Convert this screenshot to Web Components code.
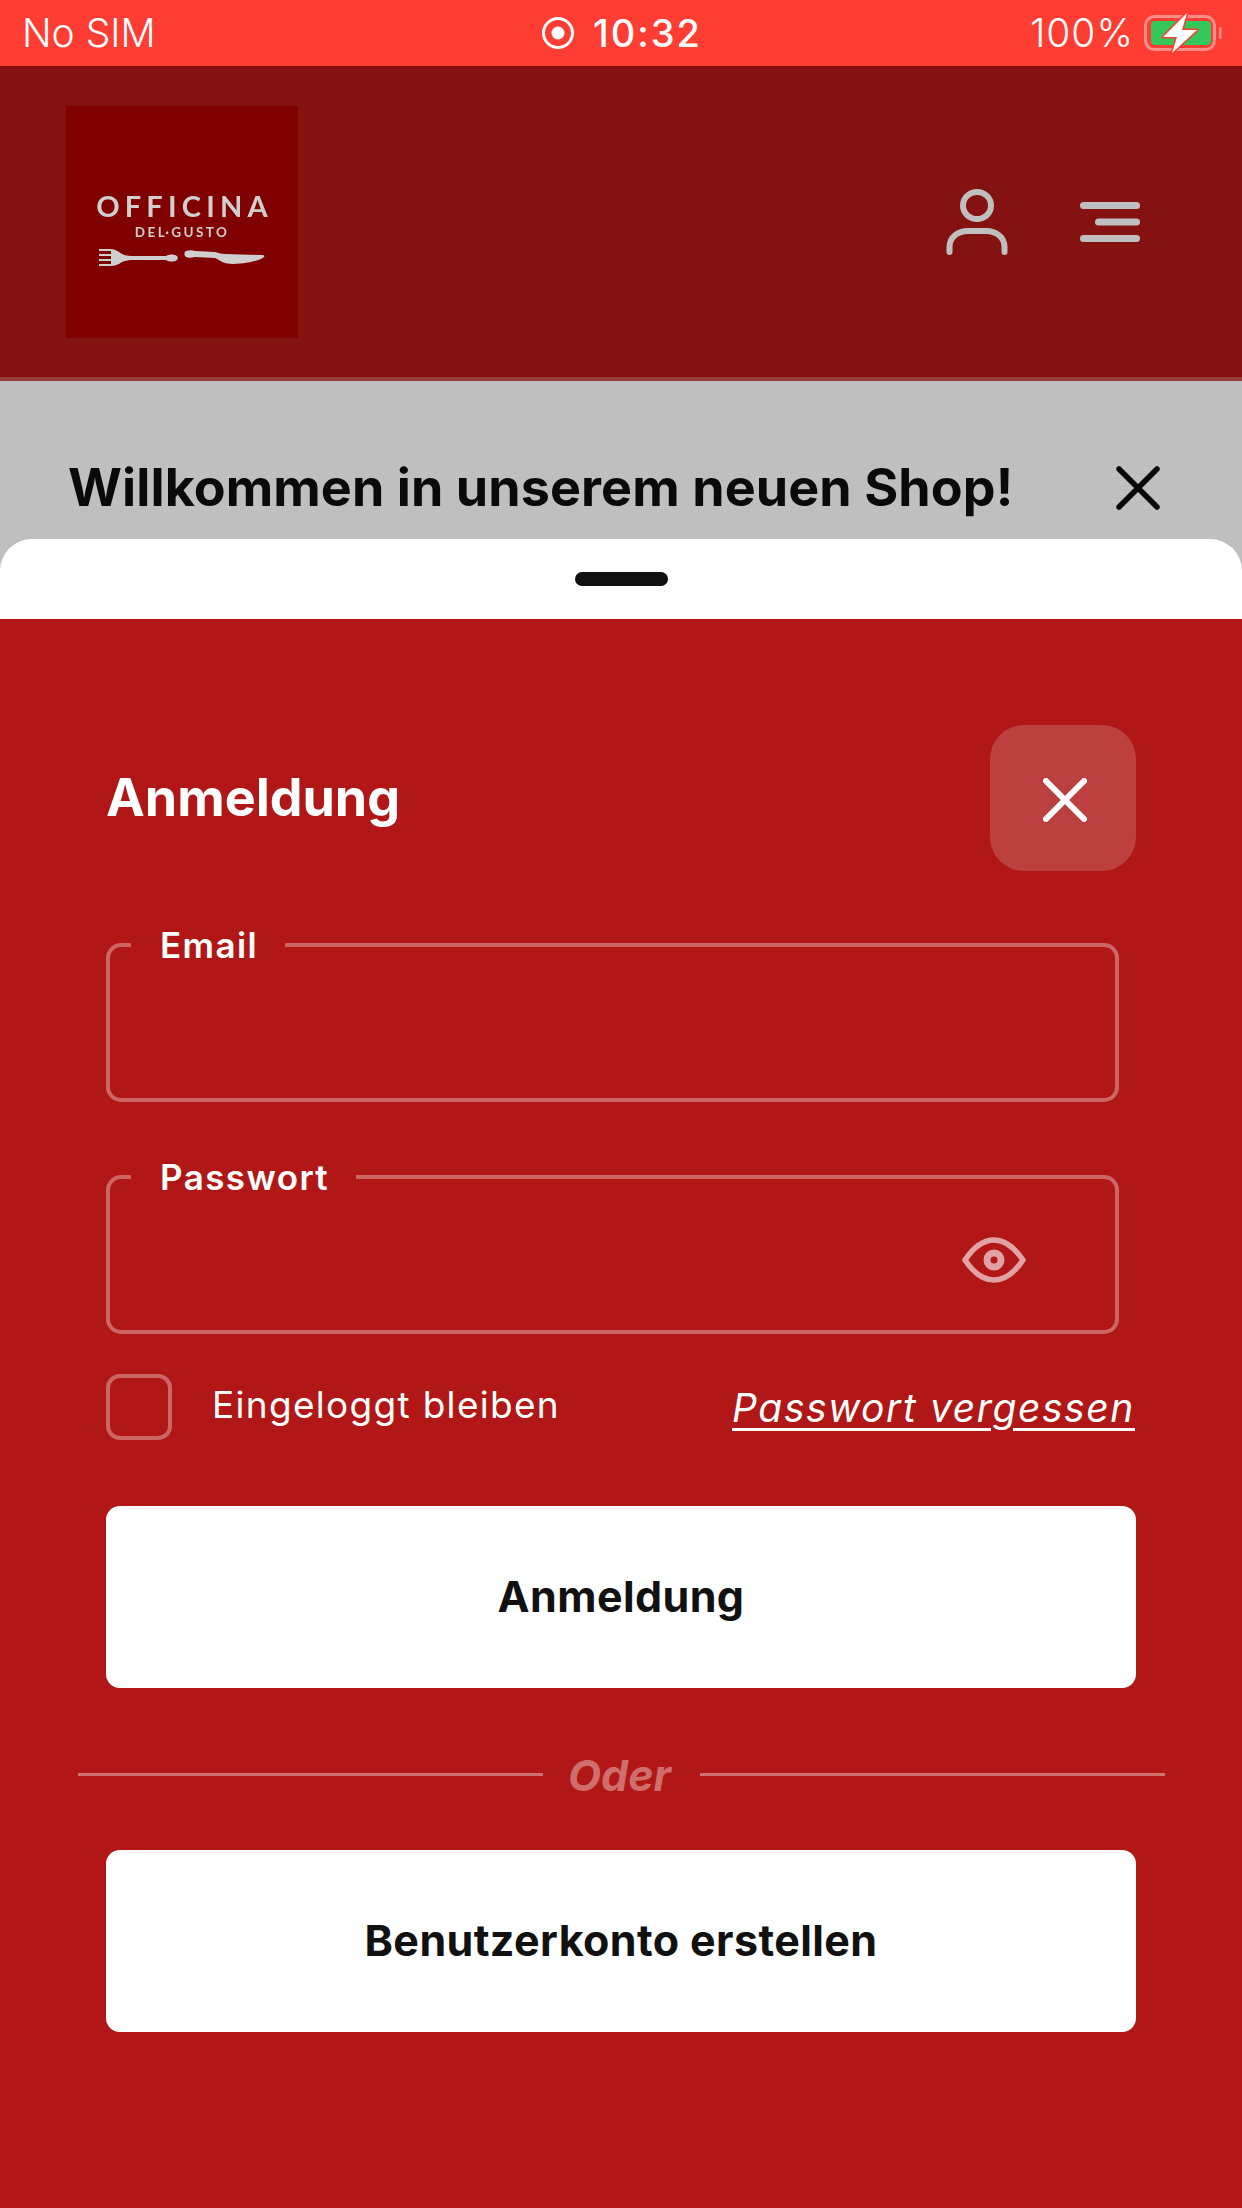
<!DOCTYPE html>
<html lang="de">
<head>
<meta charset="utf-8">
<title>Officina del Gusto</title>
<style>
  html, body { margin: 0; padding: 0; background: #b01716; }
  body { font-family: Inter, "Liberation Sans", sans-serif; }
</style>
</head>
<body>
<shop-app>
  <status-bar slot="top"></status-bar>
  <site-header slot="top"></site-header>
  <welcome-banner slot="top">Willkommen in unserem neuen Shop!</welcome-banner>
  <bottom-sheet>
    <sheet-title>Anmeldung</sheet-title>
    <outline-field label="Email"></outline-field>
    <outline-field label="Passwort" reveal></outline-field>
    <remember-row></remember-row>
    <action-button>Anmeldung</action-button>
    <or-divider>Oder</or-divider>
    <action-button>Benutzerkonto erstellen</action-button>
  </bottom-sheet>
</shop-app>

<script>
// helper: every element gets an open shadow root from a string
class Base extends HTMLElement {
  constructor() {
    super();
    this.attachShadow({ mode: 'open' });
    this.shadowRoot.innerHTML = this.markup();
  }
  markup() { return ''; }
}

class ShopApp extends Base {
  markup() {
    return `<style>
      :host { display: flex; flex-direction: column; width: 1242px; height: 2208px; background: #bfbfbf; overflow: hidden; }
    </style>
    <slot name="top"></slot>
    <slot></slot>`;
  }
}

class StatusBar extends Base {
  markup() {
    return `<style>
      :host { display: grid; grid-template-columns: 1fr auto 1fr; align-items: center; height: 66px; padding: 0 18px 0 22px;
        background: #ff3d33; color: #fff; font: 300 39px/66px Inter, sans-serif; box-sizing: border-box; }
      .mid { display: flex; align-items: center; gap: 19px; font-weight: 500; font-size: 38px; letter-spacing: 2px; margin-left: -2px; }
      .right { display: flex; align-items: center; justify-content: flex-end; gap: 10px; }
      .right span { letter-spacing: 1px; }
      svg { display: block; }
    </style>
    <div>No SIM</div>
    <div class="mid">
      <svg width="32" height="32" viewBox="0 0 32 32"><circle cx="16" cy="16" r="14.5" fill="none" stroke="#fff" stroke-width="3"/><circle cx="16" cy="16" r="6.5" fill="#fff"/></svg>
      <span>10:32</span>
    </div>
    <div class="right">
      <span>100%</span>
      <svg width="80" height="42" viewBox="0 0 80 42">
        <rect x="1.5" y="4.5" width="69" height="33" rx="9" fill="none" stroke="#ff8f88" stroke-width="3"/>
        <rect x="7" y="9" width="60" height="24" rx="4" fill="#34c759"/>
        <rect x="75" y="15" width="2.5" height="12" rx="1.2" fill="#ff8f88"/>
        <path d="M43 1 L19 25 L33 25 L28 41 L53 18 L38 18 Z" fill="#fff" stroke="#ff3d33" stroke-width="3" paint-order="stroke" stroke-linejoin="round"/>
      </svg>
    </div>`;
  }
}

class SiteHeader extends Base {
  markup() {
    return `<style>
      :host { display: flex; align-items: center; height: 315px; padding: 40px 102px 40px 66px; box-sizing: border-box;
        background: #831211; border-bottom: 4px solid #99403f; }
      .logo { width: 232px; height: 232px; background: #800000; color: #cfcfcf; display: flex; flex-direction: column; align-items: center;
        padding-top: 86px; box-sizing: border-box; font-family: Lato, sans-serif; filter: blur(.5px); }
      .name { font-size: 29px; line-height: 27px; font-weight: 700; letter-spacing: 5.2px; margin-right: -5px; }
      .sub { font-size: 13.5px; line-height: 14px; font-weight: 700; letter-spacing: 2.4px; margin-top: 6px; }
      .cutlery { display: block; margin-top: 9px; }
      .icons { margin-left: auto; display: flex; align-items: center; gap: 72px; }
      svg { display: block; }
    </style>
    <div class="logo">
      <div class="name">OFFICINA</div>
      <div class="sub">DEL·GUSTO</div>
      <svg class="cutlery" width="170" height="18" viewBox="0 0 170 18" fill="#cfcfcf">
        <path d="M2 1h11c4 0 6 1 9 3 4 3 8 4 13 4h34c3-2 8-2 11 0 1 1 1 3 0 4-3 2-8 2-11 0H35c-5 0-9 1-13 4-3 1-5 2-9 2H2v-2h12V13H2v-2h12V8H2V6h12V3H2z"/>
        <path d="M89 3c3-1 6-1 9 0l20 1c4 1 7 2 10 2l36 1c3 0 4 1 3 2-5 4-18 7-31 7-9 0-12-3-18-6l-20-1c-3 1-7 1-9 0-2-1-2-5 0-6z"/>
      </svg>
    </div>
    <div class="icons">
      <svg width="62" height="66" viewBox="0 0 62 66" fill="none" stroke="#bfbfbf" stroke-width="6" stroke-linecap="round">
        <ellipse cx="31" cy="16.500" rx="14" ry="13.500"/>
        <path d="M3.500 63V58C3.500 48 12 42 22 42H40C50 42 58.500 48 58.500 58V63"/>
      </svg>
      <svg width="60" height="40" viewBox="0 0 60 40" fill="#bfbfbf">
        <rect x="0" y="0" width="60" height="7" rx="3.5"/>
        <rect x="15" y="16.500" width="45" height="7" rx="3.5"/>
        <rect x="0" y="33" width="60" height="7" rx="3.5"/>
      </svg>
    </div>`;
  }
}

class WelcomeBanner extends Base {
  markup() {
    return `<style>
      :host { display: flex; align-items: center; justify-content: space-between; height: 158px; padding: 56px 82px 0 68px; box-sizing: border-box;
        color: #0a0a0a; font: 700 52px/1.2 Inter, sans-serif; letter-spacing: .1px; }
      svg { display: block; }
    </style>
    <slot></slot>
    <svg width="44" height="44" viewBox="0 0 44 44" fill="none" stroke="#0a0a0a" stroke-width="5.500" stroke-linecap="round"><path d="M3 3 41 41M41 3 3 41"/></svg>`;
  }
}

class BottomSheet extends Base {
  markup() {
    return `<style>
      :host { display: flex; flex-direction: column; flex: 1; min-height: 0; }
      .grab { height: 80px; background: #fff; border-radius: 32px 32px 0 0; display: flex; justify-content: center; padding-top: 33px; box-sizing: border-box; }
      .grab i { display: block; width: 93px; height: 14px; border-radius: 7px; background: #111; }
      .panel { flex: 1; background: #b01716; padding: 106px 106px 0 106px; display: flex; flex-direction: column; }
    </style>
    <div class="grab"><i></i></div>
    <div class="panel"><slot></slot></div>`;
  }
}

class SheetTitle extends Base {
  markup() {
    return `<style>
      :host { display: flex; align-items: center; justify-content: space-between; margin-bottom: 54px; color: #fff; font: 700 52px/1.2 Inter, sans-serif; }
      button { width: 146px; height: 146px; border: 0; padding: 4px 0 0 4px; border-radius: 34px; background: #bc4040; display: flex; align-items: center; justify-content: center; }
      svg { display: block; }
    </style>
    <slot></slot>
    <button aria-label="Schließen"><svg width="44" height="44" viewBox="0 0 44 44" fill="none" stroke="#fff" stroke-width="6" stroke-linecap="round"><path d="M3 3 41 41M41 3 3 41"/></svg></button>`;
  }
}

class OutlineField extends Base {
  markup() {
    const eye = this.hasAttribute('reveal') ? `<svg width="64" height="46" viewBox="0 0 64 46" fill="none" stroke="#e0a2a2" stroke-width="5.500" stroke-linejoin="round"><path d="M3 23C13 8 22 3 32 3S51 8 61 23C51 38 42 43 32 43S13 38 3 23Z"/><circle cx="32" cy="23" r="7" stroke-width="7"/></svg>` : '';
    return `<style>
      :host { display: block; margin: 0 17px 55px 0; }
      fieldset { margin: 0; height: 177px; box-sizing: border-box; border: 4px solid #cb6665; border-radius: 15px; padding: 0 89px 0 0;
        display: flex; align-items: center; justify-content: flex-end; }
      legend { margin-left: 21px; padding: 0 27px 0 29px; color: #fff; font: 600 35px/40px Inter, sans-serif; letter-spacing: 1.4px; }
      svg { display: block; margin-top: -8px; }
    </style>
    <fieldset><legend>${this.getAttribute('label')}</legend>${eye}</fieldset>`;
  }
}

class RememberRow extends Base {
  markup() {
    return `<style>
      :host { display: flex; align-items: center; height: 65px; margin: -15px 1px 67px 0; color: #fff; font: 400 37px/44px Inter, sans-serif; }
      .box { width: 66px; height: 66px; box-sizing: border-box; border: 4px solid #cb6665; border-radius: 14px; margin-right: 40px; }
      .label { letter-spacing: 1.3px; position: relative; top: -2px; }
      a { margin-left: auto; color: #fff; font-size: 39px; font-style: italic; text-decoration: underline; text-decoration-thickness: 3px; text-underline-offset: 6px; letter-spacing: 1.6px; position: relative; top: 1px; }
    </style>
    <div class="box"></div>
    <span class="label">Eingeloggt bleiben</span>
    <a>Passwort vergessen</a>`;
  }
}

class ActionButton extends Base {
  markup() {
    return `<style>
      :host { display: flex; align-items: center; justify-content: center; height: 182px; background: #fff; border-radius: 14px; color: #111; font: 700 43px/1.2 Inter, sans-serif; letter-spacing: .4px; }
    </style>
    <slot></slot>`;
  }
}

class OrDivider extends Base {
  markup() {
    return `<style>
      :host { display: flex; align-items: center; gap: 27px; height: 40px; margin: 66px -29px 56px -28px; color: #d06e6c; font: italic 700 43px/44px Inter, sans-serif; }
      i { flex: 1; height: 3px; background: #cf7372; }
      span { position: relative; top: 1px; left: -2px; }
    </style>
    <i></i><span><slot></slot></span><i></i>`;
  }
}

customElements.define('shop-app', ShopApp);
customElements.define('status-bar', StatusBar);
customElements.define('site-header', SiteHeader);
customElements.define('welcome-banner', WelcomeBanner);
customElements.define('bottom-sheet', BottomSheet);
customElements.define('sheet-title', SheetTitle);
customElements.define('outline-field', OutlineField);
customElements.define('remember-row', RememberRow);
customElements.define('action-button', ActionButton);
customElements.define('or-divider', OrDivider);
</script>
</body>
</html>
